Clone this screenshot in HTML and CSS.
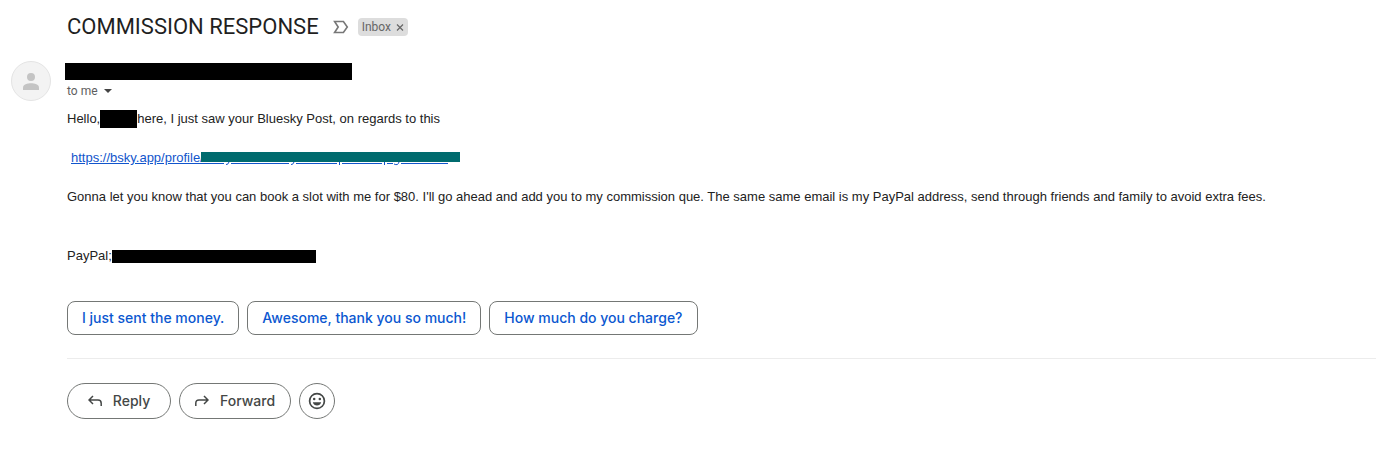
FILE: index.html
```html
<!DOCTYPE html>
<html lang="en">
<head>
<meta charset="utf-8">
<meta name="viewport" content="width=device-width, initial-scale=1">
<title>COMMISSION RESPONSE</title>
<link rel="stylesheet" href="styles.css">
</head>
<body>
<main class="mail">
  <header class="subject">
    <h1 class="subject-title">COMMISSION RESPONSE</h1>
    <svg class="importance" viewBox="0 0 16 14" width="16" height="14" aria-hidden="true"><path d="M1.6 1.5H10.4L14.3 7L10.4 12.5H1.6L5.2 7Z" fill="none" stroke="#777" stroke-width="1.6"/></svg>
    <div class="label"><span>Inbox</span><button class="label-remove" type="button" aria-label="Remove label"><svg viewBox="0 0 8 8" width="8" height="8" aria-hidden="true"><path d="M1 1.500L7 7.500M7 1.500L1 7.500" stroke="#666" stroke-width="1.2"/></svg></button></div>
  </header>
  <div class="message">
    <div class="avatar"><svg viewBox="0 0 16 17" width="16" height="17" aria-hidden="true"><circle cx="8" cy="4" r="4" fill="#c4c4c4"/><path d="M0 17V14.5C0 11.5 4.5 10.3 8 10.3S16 11.5 16 14.5V17Z" fill="#c4c4c4"/></svg></div>
    <div class="content">
      <div class="redacted sender"></div>
      <button class="recipient" type="button">to me<svg viewBox="0 0 8 4" width="8" height="4" aria-hidden="true"><path d="M0 0H8L4 4Z" fill="#444"/></svg></button>
      <div class="body">
        <p class="line">Hello,<span class="redacted name"></span>here, I just saw your Bluesky Post, on regards to this</p>
        <p class="line link-line"><a class="link" href="#">https://bsky.app/profile/</a><span class="link-cover"><svg viewBox="0 0 259 12" width="259" height="12" aria-hidden="true"><path d="M0 11.5H23M30 11.5H88M95 11.5H136M141 11.5H181M186 11.5H192M200 11.5H247" stroke="#15c" fill="none"/><path d="M25 12.5Q27 13 28 10M90 12.5Q92 13 93 10M138.500 10V13M183.500 10V13M193 12Q197 14 198 10" stroke="#15c" fill="none"/><path d="M0 0H259V10H0Z" fill="#006b6e"/></svg></span></p>
        <p class="line">Gonna let you know that you can book a slot with me for $80. I'll go ahead and add you to my commission que. The same same email is my PayPal address, send through friends and family to avoid extra fees.</p>
        <p class="line payment">PayPal;<span class="redacted account"></span></p>
      </div>
      <div class="suggestions">
        <button class="suggestion" type="button">I just sent the money.</button>
        <button class="suggestion" type="button">Awesome, thank you so much!</button>
        <button class="suggestion" type="button">How much do you charge?</button>
      </div>
      <div class="actions">
        <button class="action" type="button"><svg viewBox="0 0 14 12" width="14" height="12" aria-hidden="true"><path d="M5 1L1 5L5 9M1 5H10Q13.200 5 13.200 8.200V11" fill="none" stroke="#444746" stroke-width="1.5"/></svg>Reply</button>
        <button class="action" type="button"><svg viewBox="0 0 14 12" width="14" height="12" aria-hidden="true"><path d="M9 1L13 5L9 9M13 5H4Q.8 5 .8 8.200V11" fill="none" stroke="#444746" stroke-width="1.5"/></svg>Forward</button>
        <button class="action react" type="button" aria-label="Add reaction"><svg viewBox="0 0 18 18" width="18" height="18" aria-hidden="true"><circle cx="9" cy="9" r="7.400" fill="none" stroke="#444746" stroke-width="1.700"/><circle cx="6.200" cy="7" r="1.250" fill="#444746"/><circle cx="11.800" cy="7" r="1.250" fill="#444746"/><path d="M4.800 10.300H13.200Q12.100 13.600 9 13.600T4.800 10.300Z" fill="#444746"/></svg></button>
      </div>
    </div>
  </div>
</main>
</body>
</html>
```
FILE: styles.css
```css
* { box-sizing: border-box; }
body { margin: 0; background: #fff; color: #222; font-family: "Liberation Sans", Arial, sans-serif; font-size: 13px; }
h1, p { margin: 0; }
button { margin: 0; padding: 0; border: 0; background: none; font: inherit; color: inherit; cursor: pointer; }
svg { display: block; flex: none; }
.mail { padding: 12px 0 38px 11px; }
.subject { display: flex; align-items: center; padding-left: 56px; height: 30px; }
.subject-title { font: 400 22px/30px Roboto, sans-serif; color: #1f1f1f; }
.importance { margin: 0 9px 0 14px; }
.label { display: flex; align-items: center; gap: 5px; height: 18px; padding: 0 4px; border-radius: 4px; background: #ddd; color: #666; font: 12px/18px Roboto, sans-serif; }
.message { display: flex; gap: 16px; padding-top: 19px; }
.avatar { display: flex; flex: none; align-items: center; justify-content: center; width: 40px; height: 40px; border: 1px solid #e4e4e4; border-radius: 50%; background: #f3f3f3; }
.content { flex: 1; min-width: 0; padding-top: 2px; }
.redacted { display: inline-block; background: #000; vertical-align: middle; }
.sender { display: block; width: 287px; height: 17px; margin-left: -2px; }
.recipient { display: flex; align-items: center; gap: 6px; height: 20px; margin-top: 1px; color: #5e5e5e; font: 12px/20px Roboto, sans-serif; }
.body { display: flex; flex-direction: column; gap: 19px; margin-top: 8px; }
.line { display: flex; align-items: center; min-height: 20px; line-height: 20px; }
.name { width: 37px; height: 18px; }
.link-line { padding-left: 4px; }
.link { color: #15c; }
.link-cover { display: flex; margin-left: -3px; }
.link-cover svg { overflow: visible; }
.payment { margin-top: 20px; }
.account { width: 204px; height: 13px; }
.suggestions { display: flex; flex-wrap: wrap; gap: 8px; padding: 35px 0 23px; border-bottom: 1px solid #ececec; }
.suggestion { height: 34px; padding: 0 14px; border: 1px solid #747775; border-radius: 8px; color: #0b57d0; font: 500 14px/20px Inter, sans-serif; }
.actions { display: flex; flex-wrap: wrap; gap: 8px; padding-top: 24px; }
.action { display: flex; align-items: center; justify-content: center; gap: 11px; min-width: 104px; height: 36px; padding: 0 15px; border: 1px solid #747775; border-radius: 18px; color: #444746; font: 500 14px/20px Inter, sans-serif; }
.react { width: 36px; min-width: 36px; padding: 0; }
```
